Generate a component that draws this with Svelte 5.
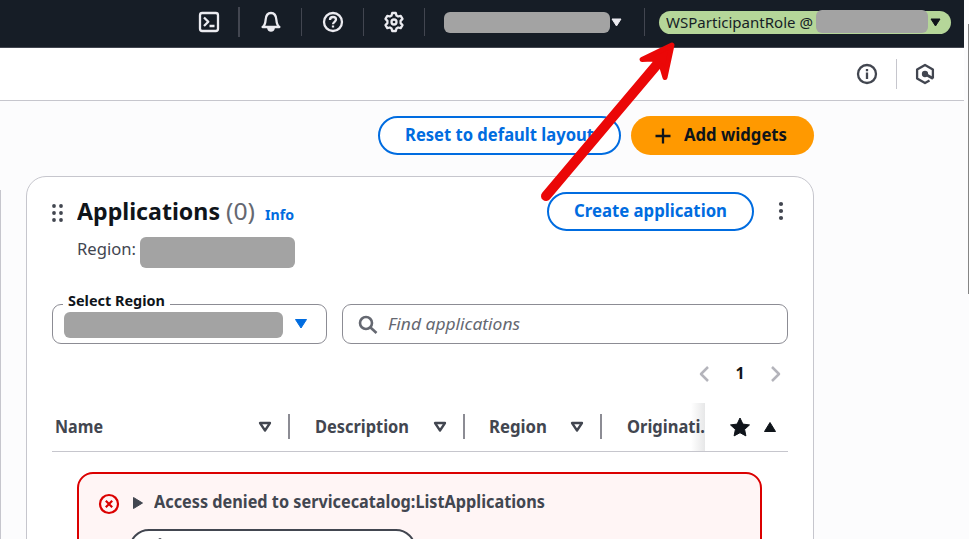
<script>
  // Sets a label to a given advance width by condensing its glyphs.
  function fit(node, width) {
    const natural = node.getBoundingClientRect().width;
    node.style.width = `${width}px`;
    node.style.transform = `scaleX(${width / natural})`;
  }

  const columns = [
    { name: 'Name', text: 48, cell: 238, pad: 3 },
    { name: 'Description', text: 94, cell: 175, pad: 25 },
    { name: 'Region', text: 58, cell: 137, pad: 24 }
  ];
</script>

{#snippet divider()}<i class="divider"></i>{/snippet}

<div class="window">
  <div class="page">
    <header class="topbar">
      <button class="tool" aria-label="CloudShell">
        <svg width="22" height="22" viewBox="0 0 22 22"><rect x="2" y="2" width="18" height="18" rx="2.200" /><path d="M6 6.500l4.300 4.200L6 15M11.500 15h5" /></svg>
      </button>
      <i class="divider wide"></i>
      <button class="tool" aria-label="Notifications">
        <svg width="22" height="22" viewBox="0 0 22 22"><path d="M2.600 16h16.800c-2-1.400-2.700-3-3-7C16.100 4.500 14.100 2 11 2S5.900 4.500 5.600 9c-.3 4-1 5.600-3 7z" /><path d="M8.300 17.500a2.800 2.800 0 0 0 5.400 0z" fill="#ebebf0" /></svg>
      </button>
      {@render divider()}
      <button class="tool" aria-label="Help">
        <svg width="22" height="22" viewBox="0 0 22 22"><circle cx="11" cy="11" r="9" /><path d="M8 9c0-2 1.200-3 3-3s3 1 3 2.600c0 2.200-3 2.200-3 4.700M11 14.400v2.100" /></svg>
      </button>
      {@render divider()}
      <button class="tool settings" aria-label="Settings">
        <svg width="22" height="22" viewBox="0 0 22 22"><path d="M9.200 2h3.600l.7 2.600 1.600.9 2.600-.7 1.800 3.100-1.900 2v2.200l1.900 2-1.800 3.100-2.600-.7-1.600.9-.7 2.600H9.200l-.7-2.600-1.600-.9-2.600.7-1.800-3.100 1.900-2V9.900l-1.900-2 1.800-3.100 2.600.7 1.600-.9z" /><circle cx="11" cy="11" r="2.500" /></svg>
      </button>
      {@render divider()}
      <div class="region-menu">
        <span class="redact"></span>
        <svg class="caret" width="11" height="9" viewBox="0 0 11 9"><path d="M1 1h9L5.500 8z" /></svg>
      </div>
      {@render divider()}
      <div class="account">
        <span class="t" use:fit={147}>WSParticipantRole @</span>
        <span class="redact"></span>
        <svg width="11" height="9" viewBox="0 0 11 9"><path d="M1 1h9L5.500 8z" /></svg>
      </div>
    </header>

    <div class="subbar">
      <svg width="22" height="22" viewBox="0 0 22 22"><circle cx="11" cy="11" r="9" /><path d="M11 9.500v6.500M11 6v2.300" /></svg>
      <i></i>
      <svg width="22" height="22" viewBox="0 0 22 22"><path d="M18.900 15.500V6.600L11 2 3.100 6.600v8.800L11 20l4.500-2.600" /><circle cx="11" cy="11" r="2" fill="#424650" /><path d="M11 11l8 4.500" stroke-width="2.600" /></svg>
    </div>

    <div class="actions">
      <button class="outline reset"><span class="t" use:fit={189}>Reset to default layout</span></button>
      <button class="primary">
        <svg width="16" height="16" viewBox="0 0 16 16"><path d="M8 .5v15M.5 8h15" /></svg>
        <span class="t" use:fit={103}>Add widgets</span>
      </button>
    </div>

    <main class="board">
      <section class="neighbour"></section>
      <section class="panel">
        <div class="head">
          <svg class="grip" width="12" height="18" viewBox="0 0 12 18">
            {#each [2, 9, 16] as y}<circle cx="2" cy={y} r="1.900" /><circle cx="9" cy={y} r="1.900" />{/each}
          </svg>
          <h2><span class="t" use:fit={143}>Applications</span></h2>
          <span class="t count" use:fit={29}>(0)</span>
          <span class="t info" use:fit={29}>Info</span>
          <button class="outline create"><span class="t" use:fit={153}>Create application</span></button>
          <svg class="dots" width="6" height="20" viewBox="0 0 6 20">
            {#each [3, 10, 17] as y}<circle cx="3" cy={y} r="2.100" />{/each}
          </svg>
        </div>

        <div class="region-line"><span class="t" use:fit={59}>Region:</span><span class="redact"></span></div>

        <div class="filters">
          <div class="select">
            <label><span class="t" use:fit={97}>Select Region</span></label>
            <span class="redact"></span>
            <svg width="14" height="12" viewBox="0 0 14 12"><path d="M1.500 1.500h11L7 10z" /></svg>
          </div>
          <div class="search">
            <svg width="20" height="20" viewBox="0 0 20 20"><circle cx="8" cy="8" r="6" /><path d="M12.500 12.500l6 5.500" /></svg>
            <span class="t" use:fit={132}>Find applications</span>
          </div>
        </div>

        <nav class="pages">
          <svg width="12" height="18" viewBox="0 0 12 18"><path d="M10 2L3 9l7 7" /></svg>
          <b>1</b>
          <svg width="12" height="18" viewBox="0 0 12 18"><path d="M2 2l7 7-7 7" /></svg>
        </nav>

        <div class="table-head">
          {#each columns as column}
            <div class="cell" style="width: {column.cell}px; padding-left: {column.pad}px">
              <span class="t" use:fit={column.text}>{column.name}</span>
              <svg width="14" height="12" viewBox="0 0 14 12"><path d="M2 2h10L7 9.500z" /></svg>
            </div>
          {/each}
          <div class="cell last"><span class="t" use:fit={78}>Originati.</span></div>
          <div class="sticky">
            <svg width="22" height="20" viewBox="0 0 22 20"><path d="M11 1l2.900 6.100 6.600.8-4.900 4.500 1.300 6.500L11 15.700l-5.900 3.200 1.300-6.500L1.500 7.900l6.600-.8z" /></svg>
            <svg width="14" height="12" viewBox="0 0 14 12"><path d="M7 1.500l5.500 9h-11z" /></svg>
          </div>
        </div>

        <div class="alert">
          <div class="alert-title">
            <svg class="error" width="22" height="22" viewBox="0 0 22 22"><circle cx="11" cy="11" r="9" /><path d="M7.800 7.800l6.400 6.400M14.200 7.800l-6.400 6.400" /></svg>
            <svg class="expand" width="12" height="14" viewBox="0 0 12 14"><path d="M1.500 1.500v11L10.500 7z" /></svg>
            <span class="t" use:fit={391}>Access denied to servicecatalog:ListApplications</span>
          </div>
          <button class="diagnose" aria-label="Diagnose">
            <svg width="18" height="20" viewBox="0 0 18 20"><path d="M17 14V6L9 1 1 6v8l8 5z" /></svg>
          </button>
        </div>
      </section>
    </main>
  </div>
  <aside class="scroll"><i></i></aside>

  <svg class="arrow" width="150" height="170" viewBox="535 35 150 170">
    <path class="shaft" d="M546 196L660 61" />
    <path class="tip" d="M642 59.500L672 45L665 77.500L661.500 66L653 59z" />
  </svg>
</div>

<style>
  :global(body) { overflow: hidden; background: #fcfcfd; }
  .window {
    position: relative;
    display: flex;
    width: 969px;
    height: 539px;
    overflow: hidden;
    font: 17px/24px 'Noto Sans', 'Open Sans', sans-serif;
    color: #424650;
    background: #fcfcfd;
  }
  .window * { box-sizing: border-box; }
  .t { display: inline-block; flex: none; white-space: nowrap; transform-origin: 0 50%; }
  svg { display: block; flex: none; fill: none; stroke-width: 2.300; stroke-linejoin: round; }
  button { margin: 0; padding: 0; font: inherit; }
  .redact { flex: none; background: #a3a3a3; border-radius: 6px; }
  .page { width: 964px; flex: none; }

  .topbar {
    display: flex;
    align-items: center;
    height: 48px;
    padding: 0 13px 3px 177px;
    background: #161d26;
    border-bottom: 1px solid #424650;
  }
  .tool { display: flex; justify-content: center; width: 61px; flex: none; border: 0; background: none; }
  .tool:first-child { padding-left: 2px; }
  .tool.settings { width: 60px; }
  .tool svg { stroke: #ebebf0; }
  .divider { width: 1px; height: 28px; flex: none; background: #424650; }
  .divider.wide { width: 2px; height: 30px; }
  .region-menu { display: flex; align-items: center; width: 219px; flex: none; padding-left: 19px; }
  .region-menu .redact { width: 166px; height: 21px; }
  .region-menu svg { margin-left: 1px; fill: #ebebf0; stroke: #ebebf0; stroke-width: 1; }
  .account {
    display: flex;
    align-items: center;
    width: 292px;
    height: 23px;
    flex: none;
    margin-left: 14px;
    padding-left: 7px;
    border-radius: 12px;
    background: #b5d699;
    color: #161d26;
    font-size: 15px;
    line-height: 23px;
  }
  .account .redact { width: 112px; height: 23px; margin: -2px 2px 0 3px; }
  .account svg { fill: #0f141a; stroke: #0f141a; stroke-width: 1; }

  .subbar {
    display: flex;
    align-items: center;
    justify-content: flex-end;
    height: 53px;
    padding-right: 28px;
    background: #fff;
    border-bottom: 1px solid #c6c6cd;
  }
  .subbar svg { stroke: #424650; }
  .subbar i { width: 1px; height: 30px; margin: 0 17px 0 18px; background: #c6c6cd; }

  .actions { display: flex; gap: 10px; padding: 15px 0 21px 378px; }
  .actions button, .create {
    display: flex;
    align-items: center;
    justify-content: center;
    height: 39px;
    padding-bottom: 2px;
    border-radius: 20px;
    font-weight: 700;
  }
  .outline { border: 2px solid #006ce0; background: #fff; color: #006ce0; }
  .reset { width: 243px; }
  .primary { width: 183px; padding-right: 4px; gap: 13px; border: 0; background: #ff9900; color: #0f141a; }
  .primary svg { margin-top: 3px; stroke: #0f141a; }

  .board { display: flex; gap: 25px; height: 363px; }
  .neighbour { width: 1px; margin-top: 14px; flex: none; background: #c6c6cd; }
  .panel {
    width: 788px;
    height: 400px;
    padding: 15px 25px 0;
    border: 1px solid #c6c6cd;
    border-radius: 20px;
    background: #fff;
  }
  .head { display: flex; align-items: center; height: 39px; }
  .grip { margin-top: 3px; fill: #424650; }
  h2 { margin: -2px 6px 0 13px; font-size: 23.500px; line-height: 30px; color: #0f141a; }
  .count { margin-top: -2px; font-size: 23.500px; line-height: 30px; color: #656871; }
  .info { margin: 5px 0 0 10px; font-size: 14.500px; font-weight: 700; color: #006ce0; }
  .create { width: 207px; margin-left: auto; }
  .dots { margin: -2px 4px 0 24px; fill: #424650; }
  .region-line { display: flex; height: 31px; margin-top: 6px; padding-left: 25px; line-height: 23px; }
  .region-line .redact { width: 155px; height: 31px; margin-left: 4px; }

  .filters { display: flex; gap: 15px; margin-top: 36px; }
  .select, .search {
    position: relative;
    display: flex;
    align-items: center;
    height: 40px;
    border: 1px solid #8c8c94;
    border-radius: 9px;
    background: #fff;
  }
  .select { width: 275px; padding-left: 11px; }
  .select .redact { width: 219px; height: 26px; margin-top: 2px; }
  .select svg { margin-left: 11px; fill: #006ce0; stroke: #006ce0; stroke-width: 1; }
  label {
    position: absolute;
    left: 10px;
    top: -13px;
    width: 107px;
    height: 16px;
    padding-left: 5px;
    background: #fff;
    font-size: 14.500px;
    font-weight: 700;
    line-height: 17px;
    color: #0f141a;
  }
  .search { flex: 1; padding-left: 15px; color: #656871; font-style: italic; }
  .search svg { margin-top: 1px; stroke: #656871; stroke-width: 2.600; }
  .search span { margin-left: 10px; margin-top: -1px; }

  .pages { display: flex; align-items: center; justify-content: space-between; width: 84px; height: 59px; margin: 0 6px 0 auto; }
  .pages svg { stroke: #b4b4bb; stroke-width: 2.500; }
  .pages b { color: #0f141a; line-height: 22px; font-size: 16px; margin-bottom: 1px; }

  .table-head { display: flex; height: 49px; border-bottom: 1px solid #c6c6cd; font-weight: 700; }
  .cell {
    position: relative;
    display: flex;
    align-items: center;
    justify-content: space-between;
    flex: none;
    padding-right: 18px;
  }
  .cell::after { content: ''; position: absolute; right: 0; top: 11px; width: 2px; height: 25px; background: #8c8c94; }
  .cell svg { stroke: #424650; }
  .last { width: 103px; padding: 0 0 0 25px; }
  .last::after { top: 0; width: 14px; height: 48px; background: linear-gradient(90deg, #0f141a00, #0f141a1a); }
  .sticky { display: flex; align-items: center; flex: 1; padding-left: 24px; gap: 12px; }
  .sticky svg { fill: #0f141a; stroke: #0f141a; stroke-width: 1; }

  .alert {
    width: 685px;
    height: 140px;
    margin: 20px 0 0 25px;
    padding: 17px 19px;
    border: 2px solid #db0000;
    border-radius: 16px;
    background: #fff5f5;
  }
  .alert-title { display: flex; align-items: center; height: 24px; font-weight: 700; }
  .alert-title span { margin-top: -2px; }
  .error { margin-top: 2px; stroke: #db0000; stroke-width: 2.200; }
  .expand { margin: -1px 10px 0 12px; fill: #424650; stroke: #424650; stroke-width: 1; }
  .diagnose { width: 287px; height: 40px; margin: 14px 0 0 31px; padding: 7px 0 0 20px; border: 2px solid #424650; border-radius: 20px; background: #fff; display: flex; align-items: flex-start; }
  .diagnose svg { stroke: #424650; stroke-width: 2; }

  .scroll { display: flex; justify-content: flex-end; flex: 1; padding-top: 24px; }
  .scroll i { width: 1px; height: 270px; background: #858585; }

  .arrow { position: absolute; left: 535px; top: 35px; stroke: #eb0707; stroke-linecap: round; }
  .shaft { stroke-width: 10; }
  .tip { fill: #eb0707; stroke-width: 5; }
</style>
